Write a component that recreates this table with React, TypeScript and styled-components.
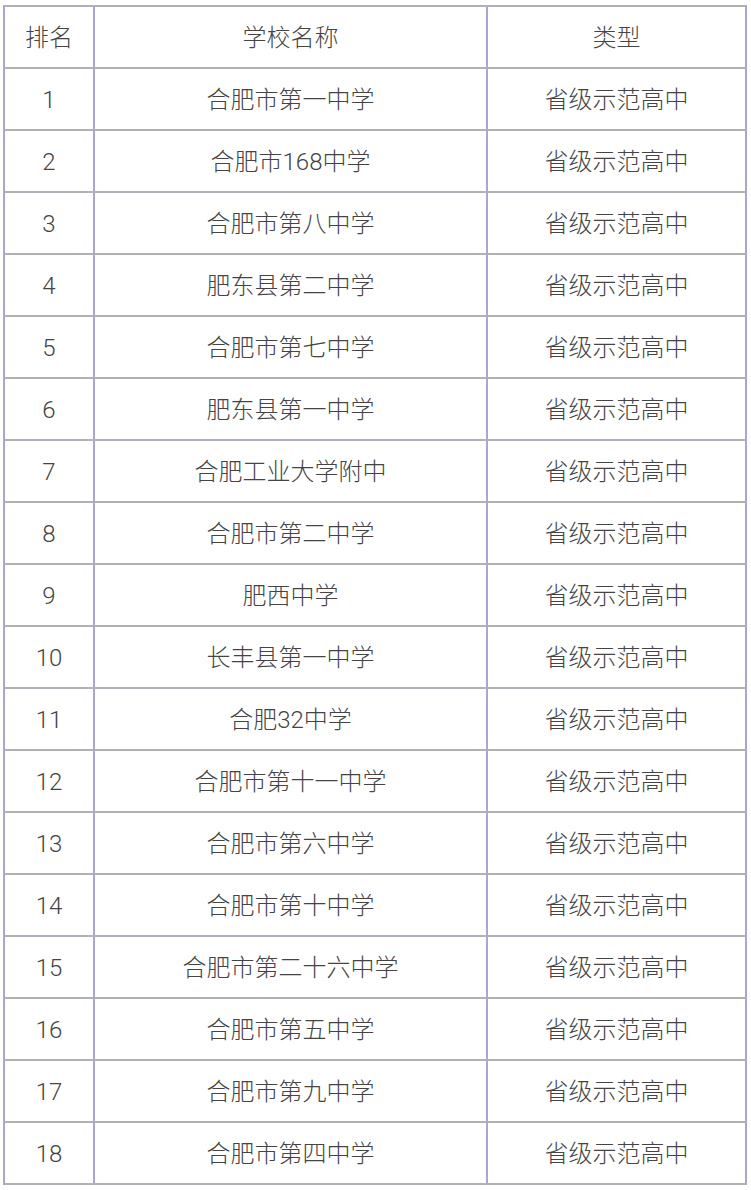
import styled, { createGlobalStyle } from "styled-components"

const GlobalStyle = createGlobalStyle`
  html, body {
    margin: 0;
    padding: 0;
    background: #fff;
  }
  body {
    font-family: Roboto, "Noto Sans CJK SC", sans-serif;
  }
`

const Wrapper = styled.div`
  padding: 5px 0 0 3px;
`

const Table = styled.table`
  border-collapse: separate;
  border-spacing: 0;
  table-layout: fixed;
  width: 742px;
  border-top: 2px solid #b0b0b8;
  border-left: 2px solid #aaa6cf;
`

const Cell = styled.td`
  box-sizing: border-box;
  height: 62px;
  padding: 2px 0 0;
  text-align: center;
  vertical-align: middle;
  font-size: 24px;
  font-weight: 300;
  color: #444;
  border-right: 2px solid #aaa6cf;
  border-bottom: 2px solid #b0b0b8;
  line-height: 1;
`

const schools = [
  "合肥市第一中学",
  "合肥市168中学",
  "合肥市第八中学",
  "肥东县第二中学",
  "合肥市第七中学",
  "肥东县第一中学",
  "合肥工业大学附中",
  "合肥市第二中学",
  "肥西中学",
  "长丰县第一中学",
  "合肥32中学",
  "合肥市第十一中学",
  "合肥市第六中学",
  "合肥市第十中学",
  "合肥市第二十六中学",
  "合肥市第五中学",
  "合肥市第九中学",
  "合肥市第四中学",
]

export default function App() {
  return (
    <Wrapper>
      <GlobalStyle />
      <Table>
        <colgroup>
          <col style={{ width: 90 }} />
          <col style={{ width: 393 }} />
          <col style={{ width: 259 }} />
        </colgroup>
        <thead>
          <tr>
            <Cell as="th">排名</Cell>
            <Cell as="th">学校名称</Cell>
            <Cell as="th">类型</Cell>
          </tr>
        </thead>
        <tbody>
          {schools.map((name, i) => (
            <tr key={name}>
              <Cell>{i + 1}</Cell>
              <Cell>{name}</Cell>
              <Cell>省级示范高中</Cell>
            </tr>
          ))}
        </tbody>
      </Table>
    </Wrapper>
  )
}
